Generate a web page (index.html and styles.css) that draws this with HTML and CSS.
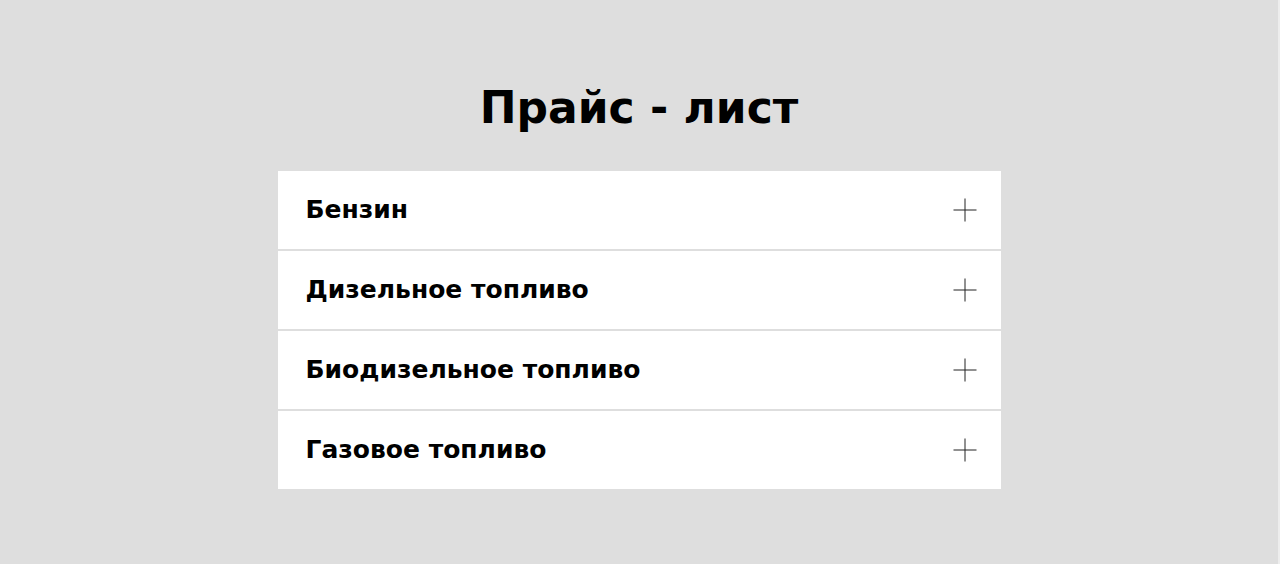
FILE: index.html
```html
<!DOCTYPE html>
<html lang="ru">
<head>
<meta charset="utf-8">
<meta name="viewport" content="width=device-width, initial-scale=1">
<title>Прайс - лист</title>
<link rel="stylesheet" href="styles.css">
</head>
<body>
<main class="prices">
  <h1 class="prices-title">Прайс - лист</h1>
  <div class="accordion">
    <button class="accordion-item" type="button" aria-expanded="false">
      <span>Бензин</span>
      <svg class="plus" viewBox="0 0 24 24" aria-hidden="true"><path d="M12 .5v23M.5 12h23"/></svg>
    </button>
    <button class="accordion-item" type="button" aria-expanded="false">
      <span>Дизельное топливо</span>
      <svg class="plus" viewBox="0 0 24 24" aria-hidden="true"><path d="M12 .5v23M.5 12h23"/></svg>
    </button>
    <button class="accordion-item" type="button" aria-expanded="false">
      <span>Биодизельное топливо</span>
      <svg class="plus" viewBox="0 0 24 24" aria-hidden="true"><path d="M12 .5v23M.5 12h23"/></svg>
    </button>
    <button class="accordion-item" type="button" aria-expanded="false">
      <span>Газовое топливо</span>
      <svg class="plus" viewBox="0 0 24 24" aria-hidden="true"><path d="M12 .5v23M.5 12h23"/></svg>
    </button>
  </div>
</main>
</body>
</html>
```
FILE: styles.css
```css
* {
  box-sizing: border-box;
}

body {
  margin: 0;
  background: #dedede;
  color: #000;
  font-family: "DejaVu Sans", sans-serif;
}

.prices {
  display: flex;
  flex-direction: column;
  align-items: center;
  gap: 35px;
  min-height: 100vh;
  padding: 80px 20px 72px;
  border-right: 2px solid #ededed;
}

.prices-title {
  margin: 0;
  font-size: 44px;
  line-height: 56px;
  font-weight: 700;
  text-align: center;
}

.accordion {
  display: flex;
  flex-direction: column;
  gap: 2px;
  width: 100%;
  max-width: 723px;
}

.accordion-item {
  display: flex;
  align-items: center;
  justify-content: space-between;
  gap: 20px;
  width: 100%;
  padding: 23px 24px 23px 28px;
  border: 0;
  background: #fff;
  color: inherit;
  font: 700 25px/32px "DejaVu Sans", sans-serif;
  text-align: left;
  cursor: pointer;
}

.plus {
  flex: none;
  width: 24px;
  height: 24px;
  fill: none;
  stroke: #222;
  stroke-width: 1;
}
```
